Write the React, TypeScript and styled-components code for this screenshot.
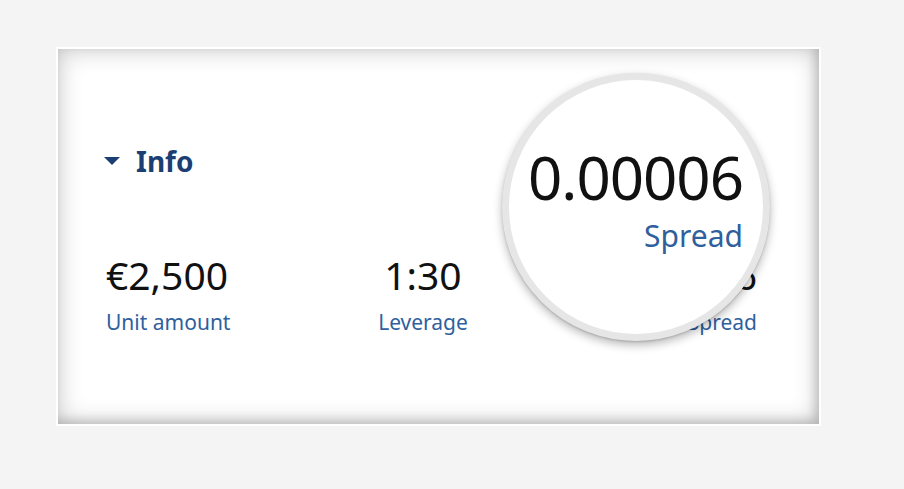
import React from "react";
import styled, { createGlobalStyle } from "styled-components";

const Global = createGlobalStyle`
  html, body {
    margin: 0;
    padding: 0;
    background: #f4f4f4;
  }
  body {
    font-family: "Noto Sans", "Open Sans", sans-serif;
  }
`;

const Page = styled.div`
  padding: 47px 0 0 56px;
`;

const Frame = styled.section`
  position: relative;
  box-sizing: border-box;
  width: 765px;
  height: 379px;
  border: 2px solid #ffffff;
  background: #ffffff;
  box-shadow: inset 0 0 24px rgba(0, 0, 0, 0.24), inset -4px -4px 10px rgba(0, 0, 0, 0.14);
  padding: 98px 62px 0 48px;
`;

const Header = styled.div`
  display: flex;
  align-items: center;
  gap: 16px;
  color: #1b3f73;
  font-weight: 700;
  font-size: 28px;
  line-height: 28px;
`;

const Caret = styled.span`
  width: 0;
  height: 0;
  border-left: 8px solid transparent;
  border-right: 8px solid transparent;
  border-top: 8px solid #1b3f73;
  margin-left: -2px;
`;

const Stats = styled.div`
  display: grid;
  grid-template-columns: 222px 190px 1fr;
  margin-top: 79px;
`;

const Stat = styled.div<{ $align: "left" | "center" | "right" }>`
  display: flex;
  flex-direction: column;
  align-items: ${(p) =>
    p.$align === "left" ? "flex-start" : p.$align === "center" ? "center" : "flex-end"};
`;

const Value = styled.div<{ $big?: boolean }>`
  color: #111111;
  font-size: ${(p) => (p.$big ? "60px" : "39px")};
  line-height: ${(p) => (p.$big ? "66px" : "42px")};
  letter-spacing: ${(p) => (p.$big ? "-1px" : "0")};
`;

const Label = styled.div<{ $big?: boolean }>`
  color: #2f5f9d;
  font-size: ${(p) => (p.$big ? "30px" : "21px")};
  line-height: ${(p) => (p.$big ? "34px" : "26px")};
  margin-top: ${(p) => (p.$big ? "9px" : "13px")};
`;

/* magnifier lens floating over the spread column */
const Lens = styled.div`
  position: absolute;
  left: 444px;
  top: 24px;
  width: 268px;
  height: 268px;
  box-sizing: border-box;
  border-radius: 50%;
  border: 7px solid #e6e6e6;
  background: #ffffff;
  box-shadow: 0 4px 10px rgba(0, 0, 0, 0.28), 0 1px 2px rgba(0, 0, 0, 0.15);
  display: flex;
  flex-direction: column;
  align-items: flex-end;
  justify-content: center;
  padding-right: 20px;
  padding-bottom: 18px;
`;

export default function App() {
  return (
    <>
      <Global />
      <Page>
        <Frame>
          <Header>
            <Caret />
            Info
          </Header>
          <Stats>
            <Stat $align="left">
              <Value>€2,500</Value>
              <Label>Unit amount</Label>
            </Stat>
            <Stat $align="center">
              <Value>1:30</Value>
              <Label>Leverage</Label>
            </Stat>
            <Stat $align="right">
              <Value>0.00006</Value>
              <Label>Spread</Label>
            </Stat>
          </Stats>
          <Lens>
            <Value $big>0.00006</Value>
            <Label $big>Spread</Label>
          </Lens>
        </Frame>
      </Page>
    </>
  );
}
